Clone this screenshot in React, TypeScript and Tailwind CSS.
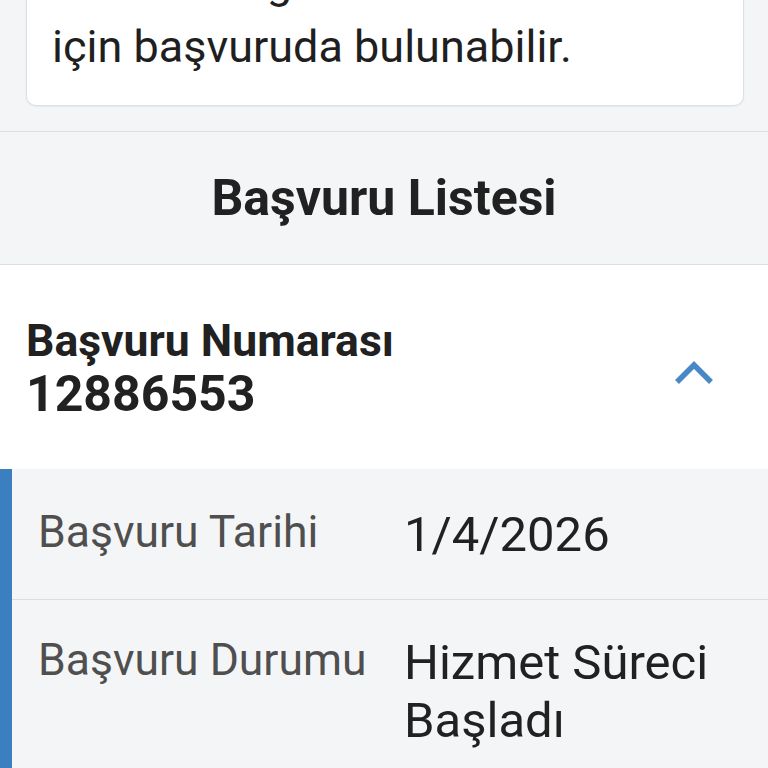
import React from "react";

export default function App() {
  return (
    <div
      className="w-[768px] h-[768px] overflow-hidden bg-[#f4f5f7] text-[#212121]"
      style={{ fontFamily: "Roboto, 'Noto Sans', sans-serif" }}
    >
      <div className="-mt-[75px]">
        {/* Info card */}
        <div className="bg-[#f4f5f7] pl-[26px] pr-[24px] pb-[25px]">
          <div className="bg-white rounded-[10px] border border-[#dddfe2] shadow-[0_1px_2px_rgba(0,0,0,0.06)] px-[25px] pt-[25px] pb-[26px] text-[45px] leading-[64px] text-[#1f1f1f]">
            <div>Abonen bağlantısı</div>
            <div>için başvuruda bulunabilir.</div>
          </div>
        </div>

        {/* Section header */}
        <div className="border-t border-b border-[#dcdde0] bg-[#f4f5f7] py-[36px] text-center">
          <h2 className="text-[50px] leading-[60px] font-bold text-[#212121]">Başvuru Listesi</h2>
        </div>

        {/* Accordion header */}
        <div className="bg-white flex items-center justify-between pl-[26px] pr-[53px] pt-[50px] pb-[47px]">
          <div className="font-bold text-[#212121]">
            <div className="text-[44.5px] leading-[52px]">Başvuru Numarası</div>
            <div className="text-[50px] leading-[55px]">12886553</div>
          </div>
          <svg
            width="42"
            height="42"
            viewBox="0 0 42 42"
            className="mt-[8px]"
            fill="none"
            stroke="#4a87c6"
            strokeWidth="5.5"
            strokeLinecap="butt"
            strokeLinejoin="miter"
          >
            <polyline points="4,30 21,13 38,30" />
          </svg>
        </div>

        {/* Details */}
        <div className="bg-[#f4f5f7] border-l-[12px] border-[#3b7fc1]">
          <div className="grid grid-cols-[366px_1fr] pl-[26px] pt-[37px] pb-[35px] border-b border-[#dcdde0]">
            <div className="text-[44.5px] leading-[52px] text-[#4f4f4f]">Başvuru Tarihi</div>
            <div className="text-[49px] leading-[58px] text-[#212121]">1/4/2026</div>
          </div>
          <div className="grid grid-cols-[366px_1fr] pl-[26px] pt-[34px] pb-[37px]">
            <div className="text-[44.5px] leading-[52px] text-[#4f4f4f]">Başvuru Durumu</div>
            <div className="text-[49px] leading-[58px] text-[#212121]">
              Hizmet Süreci
              <br />
              Başladı
            </div>
          </div>
        </div>
      </div>
    </div>
  );
}
